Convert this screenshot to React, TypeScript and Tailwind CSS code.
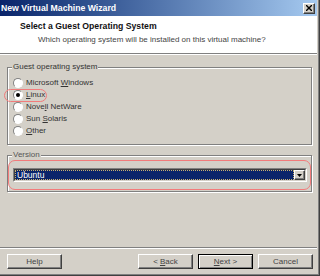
import React from "react";

const font = { fontFamily: '"Liberation Sans", Arial, sans-serif' };

function Radio({ label, keyIndex, checked }: { label: string; keyIndex: number; checked?: boolean }) {
  return (
    <div className="relative flex h-[12px] items-center">
      {checked && (
        <div className="absolute left-[-4px] top-[0px] h-[13px] w-[43px] rounded-full border border-[#f27b7b]" />
      )}
      <div className="ml-[5px] flex h-[10px] w-[10px] items-center justify-center rounded-full border border-b-white border-l-[#808080] border-r-white border-t-[#808080] bg-white">
        {checked && <div className="h-[4px] w-[4px] rounded-full bg-black" />}
      </div>
      <span className="ml-[3px] text-[8px] leading-[10px] text-[#333]">
        {label.slice(0, keyIndex)}
        <span className="underline underline-offset-1">{label[keyIndex]}</span>
        {label.slice(keyIndex + 1)}
      </span>
    </div>
  );
}

function Button({ children, isDefault }: { children: React.ReactNode; isDefault?: boolean }) {
  return (
    <div
      className={
        "flex h-[15px] w-[55px] items-center justify-center border text-[8px] text-[#444] " +
        (isDefault
          ? "border-black shadow-[inset_1px_1px_0_#fff,inset_-1px_-1px_0_#808080]"
          : "border-b-[#404040] border-l-white border-r-[#404040] border-t-white shadow-[inset_-1px_-1px_0_#808080]")
      }
    >
      {children}
    </div>
  );
}

export default function App() {
  return (
    <div className="h-[276px] w-[320px] border-b border-r border-[#404040]" style={font}>
      <div className="flex h-full flex-col border-b border-r border-[#808080] bg-[#d4d0c8] pb-[1px] pr-[1px]">
        {/* title bar */}
        <div className="flex h-[16px] items-center justify-between bg-gradient-to-r from-[#0a246a] to-[#a6caf0] pl-[1px] pr-[2px]">
          <span className="text-[8.7px] font-bold leading-none text-white">New Virtual Machine Wizard</span>
          <div className="flex h-[11px] w-[12px] items-center justify-center border border-b-[#404040] border-l-white border-r-[#404040] border-t-white bg-[#d4d0c8] shadow-[inset_-1px_-1px_0_#808080]">
            <svg width="6" height="6" viewBox="0 0 6 6">
              <path d="M0 0L6 6M6 0L0 6" stroke="#000" strokeWidth="1.4" />
            </svg>
          </div>
        </div>

        {/* header */}
        <div className="h-[37px] bg-white pl-[20px] pt-[5px]">
          <div className="text-[8.7px] font-bold leading-[10px] text-[#111]">Select a Guest Operating System</div>
          <div className="mt-[4px] pl-[18px] text-[8px] leading-[10px] text-[#444]">
            Which operating system will be installed on this virtual machine?
          </div>
        </div>
        <div className="h-[1px] bg-[#808080]" />
        <div className="h-[1px] bg-white" />

        {/* body */}
        <div className="flex flex-1 flex-col pl-[7px]">
          <div className="relative mt-[12px] h-[78px] w-[305px] border border-[#808080] shadow-[inset_1px_1px_0_#fff,1px_1px_0_#fff]">
            <span className="absolute left-[4px] top-[-6px] bg-[#d4d0c8] px-[1px] text-[8px] leading-[10px] text-[#333]">
              Guest operating system
            </span>
            <div className="flex flex-col pt-[9px]">
              <Radio label="Microsoft Windows" keyIndex={10} />
              <Radio label="Linux" keyIndex={0} checked />
              <Radio label="Novell NetWare" keyIndex={4} />
              <Radio label="Sun Solaris" keyIndex={4} />
              <Radio label="Other" keyIndex={0} />
            </div>
          </div>

          <div className="relative mt-[10px] h-[37px] w-[305px] border border-[#808080] shadow-[inset_1px_1px_0_#fff,1px_1px_0_#fff]">
            <span className="absolute left-[4px] top-[-6px] bg-[#d4d0c8] px-[1px] text-[8px] leading-[10px] text-[#555]">
              Version
            </span>
            <div className="mt-[4px] h-[30px] w-[303px] rounded-[7px] border border-[#f27b7b] pl-[4px] pt-[7px]">
              <div className="flex h-[14px] w-[294px] border border-b-white border-l-[#808080] border-r-white border-t-[#808080]">
                <div className="flex flex-1 border border-b-[#d4d0c8] border-l-[#404040] border-r-[#d4d0c8] border-t-[#404040] bg-white">
                  <div className="flex flex-1 items-center border border-dotted border-[#c8b070] bg-[#0a246a] pl-[1px] text-[8.5px] leading-none text-white">
                    Ubuntu
                  </div>
                  <div className="flex w-[11px] items-center justify-center border border-b-[#404040] border-l-white border-r-[#404040] border-t-white bg-[#d4d0c8] shadow-[inset_-1px_-1px_0_#808080]">
                    <svg width="5" height="3" viewBox="0 0 5 3">
                      <path d="M0 0H5L2.5 3Z" fill="#000" />
                    </svg>
                  </div>
                </div>
              </div>
            </div>
          </div>

          <div className="flex-1" />
        </div>

        {/* footer */}
        <div className="h-[1px] bg-[#808080]" />
        <div className="h-[1px] bg-white" />
        <div className="flex justify-between pb-[4px] pl-[7px] pr-[4px] pt-[5px]">
          <Button>Help</Button>
          <div className="flex gap-[5px]">
            <Button>
              &lt; <span className="ml-[2px] underline underline-offset-1">B</span>ack
            </Button>
            <Button isDefault>
              <span className="underline underline-offset-1">N</span>ext &gt;
            </Button>
            <Button>Cancel</Button>
          </div>
        </div>
      </div>
    </div>
  );
}
